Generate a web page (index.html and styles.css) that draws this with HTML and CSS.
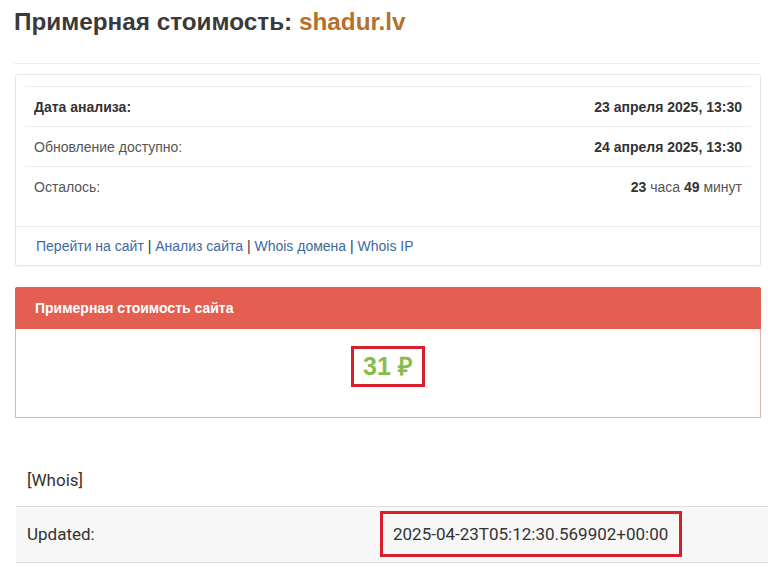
FILE: index.html
```html
<!DOCTYPE html>
<html>
<head>
  <meta charset="utf-8">
  <title>Примерная стоимость: shadur.lv</title>
  <link rel="stylesheet" href="styles.css">
</head>
<body>
  <div class="page-header">
    <h1>Примерная стоимость: <span class="domain">shadur.lv</span></h1>
  </div>

  <div class="panel">
    <div class="info-table">
      <div class="info-row">
        <span class="label strong">Дата анализа:</span>
        <span class="value"><b>23 апреля 2025, 13:30</b></span>
      </div>
      <div class="info-row">
        <span class="label">Обновление доступно:</span>
        <span class="value"><b>24 апреля 2025, 13:30</b></span>
      </div>
      <div class="info-row">
        <span class="label">Осталось:</span>
        <span class="value"><b>23</b> часа <b>49</b> минут</span>
      </div>
    </div>
    <div class="panel-footer">
      <a href="#">Перейти на сайт</a> | <a href="#">Анализ сайта</a> | <a href="#">Whois домена</a> | <a href="#">Whois IP</a>
    </div>
  </div>

  <div class="panel-danger">
    <div class="panel-heading">Примерная стоимость сайта</div>
    <div class="panel-body">
      <span class="price">31 ₽</span>
    </div>
  </div>

  <div class="whois">
    <div class="whois-title">[Whois]</div>
    <div class="whois-row">
      <span class="whois-label">Updated:</span>
      <span class="whois-value">2025-04-23T05:12:30.569902+00:00</span>
    </div>
  </div>
</body>
</html>
```

FILE: styles.css
```css
* {
  box-sizing: border-box;
  margin: 0;
  padding: 0;
}

body {
  font-family: 'Liberation Sans', Arial, sans-serif;
  font-size: 14px;
  color: #333;
  background: #fff;
  padding: 0 7px 0 14px;
  overflow: hidden;
}

/* Title */
.page-header {
  padding: 9px 0 28px;
  border-bottom: 1px solid #eee;
}

h1 {
  font-size: 24.3px;
  line-height: 26px;
  font-weight: bold;
  color: #3a3a3a;
}

.domain {
  color: #b5712c;
}

/* Info panel */
.panel {
  margin: 10px 0 0 1px;
  border: 1px solid #e6e6e6;
  border-radius: 2px;
  padding: 11px 9px 0;
  box-shadow: 0 1px 1px rgba(0, 0, 0, 0.04);
}

.info-row {
  display: flex;
  justify-content: space-between;
  align-items: center;
  height: 40px;
  padding: 0 9px;
  border-top: 1px solid #eee;
}

.label {
  color: #555;
}

.label.strong {
  font-weight: bold;
  color: #333;
}

.value {
  color: #555;
}

.value b {
  color: #333;
}

.panel-footer {
  margin: 20px -9px 0;
  border-top: 1px solid #eee;
  padding: 1px 20px 0;
  line-height: 37px;
  color: #333;
}

.panel-footer a {
  color: #3d6a9e;
  text-decoration: none;
}

/* Price panel */
.panel-danger {
  margin: 21px 0 0 1px;
}

.panel-heading {
  background: #e25f51;
  color: #fff;
  font-weight: bold;
  height: 42px;
  line-height: 42px;
  padding: 0 20px;
  border-radius: 2px 2px 0 0;
}

.panel-body {
  border: 1px solid #e2b3ab;
  border-top: none;
  padding: 17px 0 30px;
  text-align: center;
}

.price {
  display: inline-block;
  border: 3px solid #d81f2b;
  height: 41px;
  line-height: 35px;
  padding: 0 9px;
  font-size: 25px;
  font-weight: bold;
  color: #84bd4c;
}

/* Whois */
.whois {
  margin: 38px -7px 0 2px;
  font-family: Roboto, 'Liberation Sans', sans-serif;
  font-size: 17px;
  color: #333;
}

.whois-title {
  padding: 12px 11px 14px;
  line-height: 24px;
}

.whois-row {
  display: grid;
  grid-template-columns: 364px auto;
  align-items: center;
  justify-items: start;
  height: 57px;
  padding: 3px 0 5px;
  background: #f7f7f7;
  border-top: 1px solid #ddd;
  border-bottom: 1px solid #ddd;
}

.whois-label {
  padding-left: 11px;
}

.whois-value {
  border: 3px solid #d81f2b;
  height: 46px;
  line-height: 40px;
  padding: 0 11px 0 10px;
}
```
